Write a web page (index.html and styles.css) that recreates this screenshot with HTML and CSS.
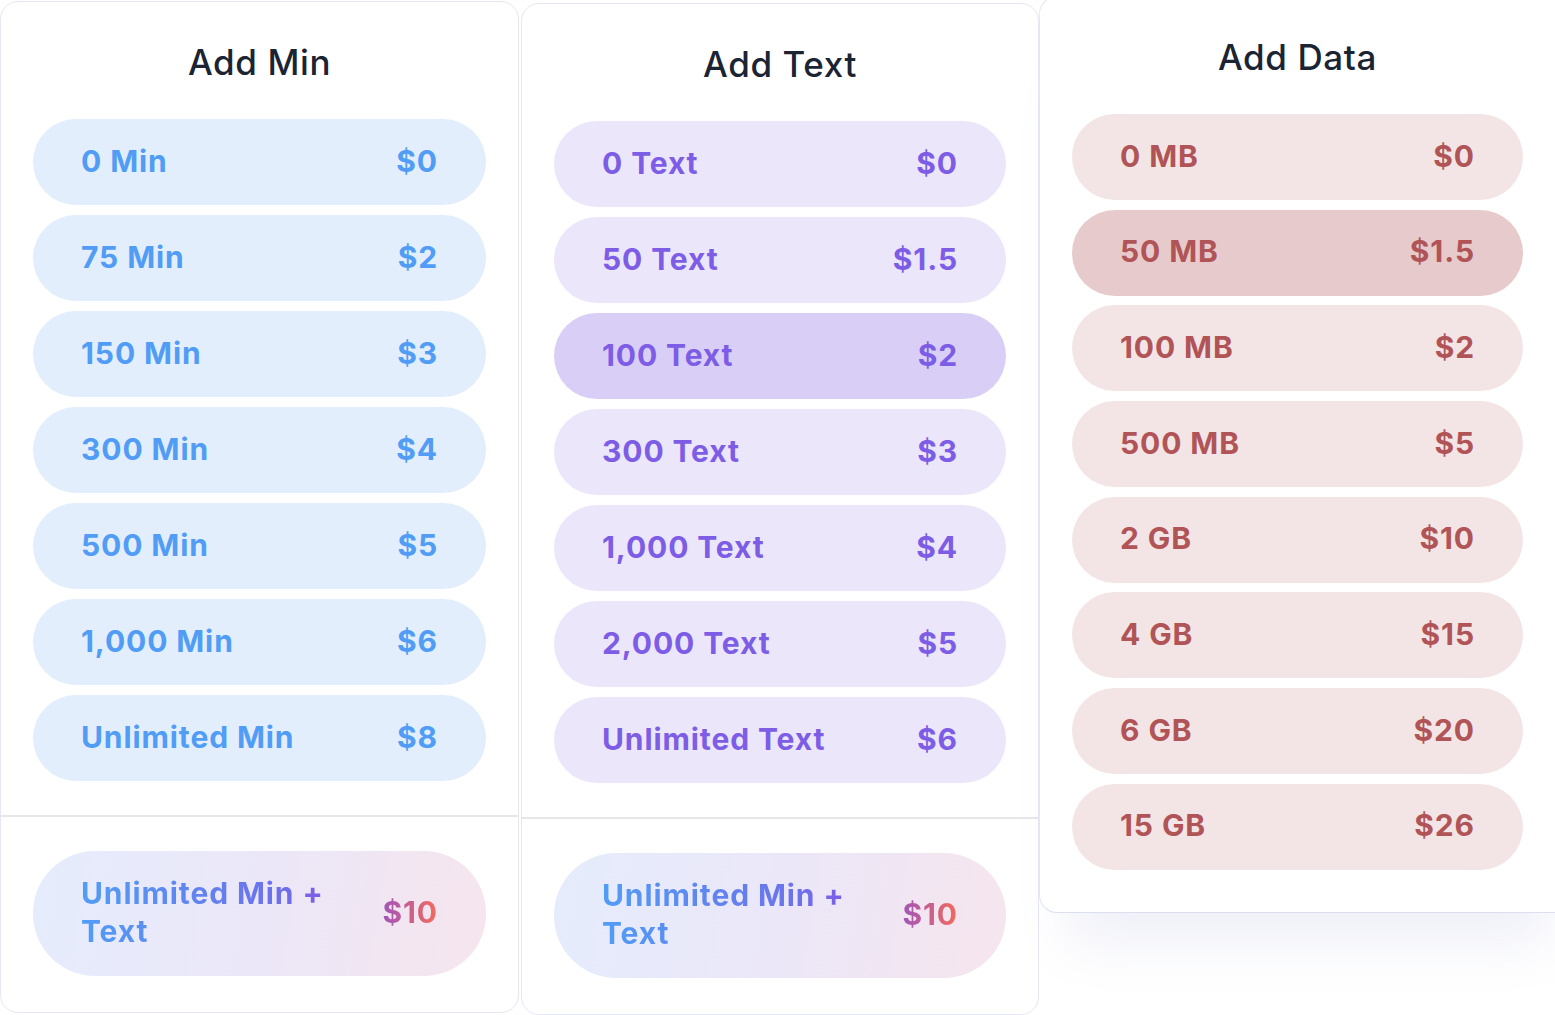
FILE: index.html
```html
<!DOCTYPE html>
<html>
<head>
<meta charset="utf-8">
<link rel="stylesheet" href="styles.css">
</head>
<body>
<div class="row">
  <section class="card card-min">
    <h2 class="card-title">Add Min</h2>
    <div class="options">
      <div class="opt opt-blue"><span>0 Min</span><span>$0</span></div>
      <div class="opt opt-blue"><span>75 Min</span><span>$2</span></div>
      <div class="opt opt-blue"><span>150 Min</span><span>$3</span></div>
      <div class="opt opt-blue"><span>300 Min</span><span>$4</span></div>
      <div class="opt opt-blue"><span>500 Min</span><span>$5</span></div>
      <div class="opt opt-blue"><span>1,000 Min</span><span>$6</span></div>
      <div class="opt opt-blue"><span>Unlimited Min</span><span>$8</span></div>
    </div>
    <div class="combo-wrap">
      <div class="combo"><span class="combo-name">Unlimited Min +<br>Text</span><span class="combo-price">$10</span></div>
    </div>
  </section>
  <section class="card card-text">
    <h2 class="card-title">Add Text</h2>
    <div class="options">
      <div class="opt opt-purple"><span>0 Text</span><span>$0</span></div>
      <div class="opt opt-purple"><span>50 Text</span><span>$1.5</span></div>
      <div class="opt opt-purple selected"><span>100 Text</span><span>$2</span></div>
      <div class="opt opt-purple"><span>300 Text</span><span>$3</span></div>
      <div class="opt opt-purple"><span>1,000 Text</span><span>$4</span></div>
      <div class="opt opt-purple"><span>2,000 Text</span><span>$5</span></div>
      <div class="opt opt-purple"><span>Unlimited Text</span><span>$6</span></div>
    </div>
    <div class="combo-wrap">
      <div class="combo"><span class="combo-name">Unlimited Min +<br>Text</span><span class="combo-price">$10</span></div>
    </div>
  </section>
  <section class="card card-data">
    <h2 class="card-title">Add Data</h2>
    <div class="options options-data">
      <div class="opt opt-red"><span>0 MB</span><span>$0</span></div>
      <div class="opt opt-red selected"><span>50 MB</span><span>$1.5</span></div>
      <div class="opt opt-red"><span>100 MB</span><span>$2</span></div>
      <div class="opt opt-red"><span>500 MB</span><span>$5</span></div>
      <div class="opt opt-red"><span>2 GB</span><span>$10</span></div>
      <div class="opt opt-red"><span>4 GB</span><span>$15</span></div>
      <div class="opt opt-red"><span>6 GB</span><span>$20</span></div>
      <div class="opt opt-red"><span>15 GB</span><span>$26</span></div>
    </div>
  </section>
</div>
</body>
</html>
```
FILE: styles.css
```css
html, body {
  margin: 0;
  padding: 0;
  background: #ffffff;
  overflow: hidden;
  height: 1015px;
}
body {
  font-family: "Inter", "Noto Sans", sans-serif;
}
.row {
  display: flex;
  align-items: flex-start;
  width: 1600px;
}
.card {
  box-sizing: border-box;
  width: 519px;
  background: #ffffff;
  border: 1.5px solid #e5e7f4;
  border-radius: 18px;
  flex: none;
}
.card-min {
  margin-top: 1px;
  margin-left: 0;
}
.card-text {
  margin-top: 3px;
  margin-left: 2px;
  width: 518px;
}
.card-data {
  margin-top: -4px;
  margin-left: 0;
  width: 540px;
  padding-right: 23px;
  padding-bottom: 42px;
  position: relative;
  z-index: 2;
  border-bottom-color: #dcdff0;
  box-shadow: 0 60px 50px -30px rgba(120, 130, 200, 0.12);
}
.card-title {
  margin: 0;
  padding: 40px 0 37px;
  text-align: center;
  font-size: 35px;
  line-height: 40px;
  font-weight: 500;
  color: #1b2433;
  letter-spacing: 0.6px;
}
.options {
  display: flex;
  flex-direction: column;
  gap: 10px;
  padding: 0 32px 34px;
  border-bottom: 2px solid #e7e7ea;
}
.options-data {
  gap: 9.7px;
  padding-bottom: 0;
  border-bottom: none;
}
.opt {
  box-sizing: border-box;
  height: 86px;
  border-radius: 43px;
  display: flex;
  align-items: center;
  justify-content: space-between;
  padding: 0 48px 3px;
  font-size: 30px;
  font-weight: 700;
  letter-spacing: 0.9px;
}
.opt-blue {
  background: #e3eefc;
  color: #519df5;
}
.opt-purple {
  background: #ebe6fa;
  color: #7d5de6;
}
.opt-purple.selected {
  background: #d9cff6;
}
.opt-red {
  background: #f3e4e5;
  color: #b05457;
}
.opt-red.selected {
  background: #e7cacb;
}
.combo-wrap {
  padding: 34px 32px 36px;
}
.combo {
  box-sizing: border-box;
  height: 125px;
  border-radius: 62px;
  display: flex;
  align-items: center;
  justify-content: space-between;
  padding: 0 48px 3px;
  background: linear-gradient(100deg, #e5ecfc 0%, #ebe7f8 50%, #f6e5ed 100%);
  font-size: 30px;
  font-weight: 700;
  letter-spacing: 0.9px;
}
.combo-name {
  line-height: 38px;
  background: linear-gradient(90deg, #519df5 0%, #6c72ec 80%, #7d5de6 100%);
  -webkit-background-clip: text;
  background-clip: text;
  color: transparent;
}
.combo-price {
  background: linear-gradient(90deg, #a155bb 0%, #f26b5a 100%);
  -webkit-background-clip: text;
  background-clip: text;
  color: transparent;
}
```
